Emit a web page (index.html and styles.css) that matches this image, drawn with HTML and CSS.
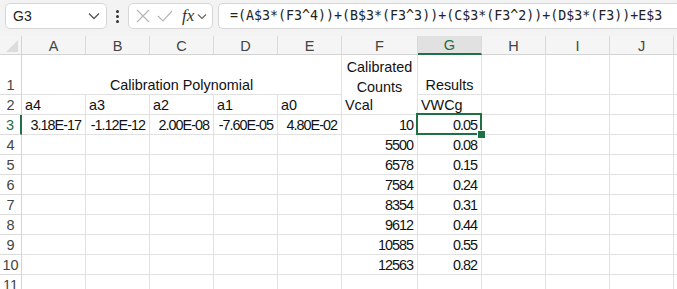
FILE: index.html
```html
<!DOCTYPE html>
<html lang="en">
<head>
    <meta charset="UTF-8">
    <title>Calibration</title>
    <link rel="stylesheet" href="styles.css">
</head>
<body>
    <div class="toolbar">
        <div class="namebox">
            <span>G3</span>
            <svg width="12" height="8" viewBox="0 0 12 8"><path d="M1 1.5 L6 6.5 L11 1.5" fill="none" stroke="#555" stroke-width="1.3"/></svg>
        </div>
        <div class="dots"><i></i><i></i><i></i></div>
        <div class="fxbox">
            <svg width="14" height="14" viewBox="0 0 14 14"><path d="M1 1 L13 13 M13 1 L1 13" stroke="#b5b5b5" stroke-width="1.2"/></svg>
            <svg width="16" height="14" viewBox="0 0 16 14"><path d="M1 7 L6 12 L15 2" fill="none" stroke="#b5b5b5" stroke-width="1.2"/></svg>
            <span class="fx">fx</span>
            <svg width="10" height="7" viewBox="0 0 10 7"><path d="M1 1.5 L5 5.5 L9 1.5" fill="none" stroke="#666" stroke-width="1.2"/></svg>
        </div>
        <div class="formula">=(A$3*(F3^4))+(B$3*(F3^3))+(C$3*(F3^2))+(D$3*(F3))+E$3</div>
    </div>

    <div class="sheet">
        <div class="corner"><span class="tri"></span></div>
        <div class="colhead">A</div>
        <div class="colhead">B</div>
        <div class="colhead">C</div>
        <div class="colhead">D</div>
        <div class="colhead">E</div>
        <div class="colhead">F</div>
        <div class="colhead active">G</div>
        <div class="colhead">H</div>
        <div class="colhead">I</div>
        <div class="colhead">J</div>
        <div class="colhead"></div>

        <div class="rowhead tall">1</div>
        <div class="cell center merged">Calibration Polynomial</div>
        <div class="cell center wrap">Calibrated<br>Counts</div>
        <div class="cell center">Results</div>
        <div class="cell"></div>
        <div class="cell"></div>
        <div class="cell"></div>
        <div class="cell"></div>

        <div class="rowhead">2</div>
        <div class="cell">a4</div>
        <div class="cell">a3</div>
        <div class="cell">a2</div>
        <div class="cell">a1</div>
        <div class="cell">a0</div>
        <div class="cell">Vcal</div>
        <div class="cell">VWCg</div>
        <div class="cell"></div>
        <div class="cell"></div>
        <div class="cell"></div>
        <div class="cell"></div>

        <div class="rowhead active">3</div>
        <div class="cell num">3.18E-17</div>
        <div class="cell num">-1.12E-12</div>
        <div class="cell num">2.00E-08</div>
        <div class="cell num">-7.60E-05</div>
        <div class="cell num">4.80E-02</div>
        <div class="cell num">10</div>
        <div class="cell num selected">0.05</div>
        <div class="cell"></div>
        <div class="cell"></div>
        <div class="cell"></div>
        <div class="cell"></div>
    </div>

    <script>
        const rows = [
            [4, 5500, '0.08'],
            [5, 6578, '0.15'],
            [6, 7584, '0.24'],
            [7, 8354, '0.31'],
            [8, 9612, '0.44'],
            [9, 10585, '0.55'],
            [10, 12563, '0.82'],
            [11, '', '']
        ];
        const sheet = document.querySelector('.sheet');
        rows.forEach(function (r) {
            let html = '<div class="rowhead">' + r[0] + '</div>';
            for (let i = 0; i < 5; i++) html += '<div class="cell"></div>';
            html += '<div class="cell num">' + r[1] + '</div>';
            html += '<div class="cell num">' + r[2] + '</div>';
            for (let i = 0; i < 4; i++) html += '<div class="cell"></div>';
            sheet.insertAdjacentHTML('beforeend', html);
        });
    </script>
</body>
</html>
```

FILE: styles.css
```css
* {
    box-sizing: border-box;
}
body {
    margin: 0;
    font-family: "Liberation Sans", Arial, sans-serif;
    background: #fff;
    overflow: hidden;
}
.toolbar {
    height: 36px;
    background: #f3f3f3;
    display: flex;
    align-items: flex-start;
    padding: 3px 0 0 5px;
}
.namebox {
    width: 102px;
    height: 26px;
    background: #fff;
    border: 1px solid #d6d6d6;
    border-radius: 5px;
    display: flex;
    align-items: center;
    justify-content: space-between;
    padding: 0 6px 0 7px;
    font-size: 14px;
    color: #222;
}
.dots {
    width: 21px;
    height: 26px;
    display: flex;
    flex-direction: column;
    align-items: center;
    justify-content: center;
    gap: 2px;
}
.dots i {
    width: 3px;
    height: 3px;
    background: #333;
    border-radius: 50%;
}
.fxbox {
    width: 85px;
    height: 26px;
    background: #fff;
    border: 1px solid #d6d6d6;
    border-radius: 5px;
    display: flex;
    align-items: center;
    padding: 0 3px 0 7px;
    gap: 7px;
}
.fx {
    font-family: "Liberation Serif", serif;
    font-style: italic;
    font-size: 17px;
    color: #333;
    margin-left: 2px;
    margin-right: -4px;
}
.formula {
    flex: 1;
    height: 26px;
    margin-left: 5px;
    background: #fff;
    border: 1px solid #d6d6d6;
    border-right: none;
    border-radius: 5px 0 0 5px;
    padding-left: 11px;
    font-family: "DejaVu Sans Mono", monospace;
    font-size: 13.3px;
    line-height: 24px;
    color: #222;
    white-space: nowrap;
}
.sheet {
    display: grid;
    grid-template-columns: 22px 64px 64px 64px 64px 64px 76px 64px 64px 64px 64px 10px;
    grid-template-rows: 19px 40px;
    grid-auto-rows: 20px;
}
.corner {
    background: #f5f5f5;
    border-right: 1px solid #d4d4d4;
    border-bottom: 1px solid #d4d4d4;
    position: relative;
}
.tri {
    position: absolute;
    right: 3px;
    bottom: 2px;
    width: 0;
    height: 0;
    border-left: 12px solid transparent;
    border-bottom: 12px solid #dcdcdc;
}
.colhead {
    background: #f5f5f5;
    border-right: 1px solid #dadada;
    border-bottom: 1px solid #d4d4d4;
    font-size: 14.5px;
    color: #444;
    display: flex;
    align-items: center;
    justify-content: center;
    padding-top: 1px;
}
.colhead.active {
    background: #e1e1e1;
    color: #1e6e42;
    border-bottom: 2px solid #1e7145;
}
.rowhead {
    border-right: 1px solid #d4d4d4;
    border-bottom: 1px solid #dcdcdc;
    font-size: 14.5px;
    color: #444;
    display: flex;
    align-items: flex-end;
    justify-content: center;
    padding-bottom: 1px;
    background: #fff;
}
.rowhead.active {
    color: #1e6e42;
    border-right: 2px solid #1e7145;
}
.cell {
    border-right: 1px solid #e1e1e1;
    border-bottom: 1px solid #e1e1e1;
    font-size: 14.4px;
    color: #111;
    display: flex;
    align-items: flex-end;
    padding: 0 3px 1px 3px;
    white-space: nowrap;
    position: relative;
}
.cell.merged {
    grid-column: span 5;
}
.cell.center {
    justify-content: center;
    text-align: center;
}
.cell.wrap {
    line-height: 20px;
    padding-bottom: 0;
    margin-bottom: -2px;
    border-bottom: none;
}
.cell.num {
    justify-content: flex-end;
    letter-spacing: -1px;
    padding-right: 4px;
}
.selected::before {
    content: "";
    position: absolute;
    top: -2px;
    left: -2px;
    right: -1px;
    bottom: -1px;
    border: 2px solid #1e7145;
}
.selected::after {
    content: "";
    position: absolute;
    right: -5px;
    bottom: -5px;
    width: 7px;
    height: 7px;
    background: #1e7145;
    border: 1px solid #fff;
    z-index: 2;
}
```
